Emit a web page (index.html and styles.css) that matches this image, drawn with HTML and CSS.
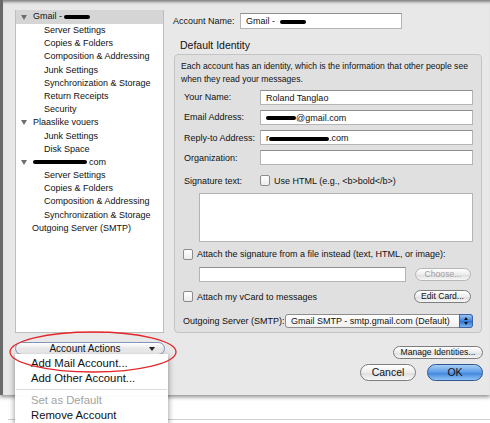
FILE: index.html
```html
<!DOCTYPE html>
<html lang="en">
<head>
    <meta charset="UTF-8">
    <title>Account Settings</title>
    <link rel="stylesheet" href="styles.css">
</head>
<body>
    <div class="window">
        <div class="sidebar">
            <ul class="tree">
                <li class="row parent selected"><span class="twisty"></span>Gmail - <span class="redact r-gmail"></span></li>
                <li class="row child">Server Settings</li>
                <li class="row child">Copies &amp; Folders</li>
                <li class="row child">Composition &amp; Addressing</li>
                <li class="row child">Junk Settings</li>
                <li class="row child">Synchronization &amp; Storage</li>
                <li class="row child">Return Receipts</li>
                <li class="row child">Security</li>
                <li class="row parent"><span class="twisty"></span>Plaaslike vouers</li>
                <li class="row child">Junk Settings</li>
                <li class="row child">Disk Space</li>
                <li class="row parent"><span class="twisty"></span><span class="redact r-other"></span>com</li>
                <li class="row child">Server Settings</li>
                <li class="row child">Copies &amp; Folders</li>
                <li class="row child">Composition &amp; Addressing</li>
                <li class="row child">Synchronization &amp; Storage</li>
                <li class="row top">Outgoing Server (SMTP)</li>
            </ul>
            <button class="actions-btn">Account Actions<span class="arrow"></span></button>
        </div>

        <div class="main">
            <div class="account-row">
                <label>Account Name:</label>
                <div class="field name-field">Gmail - <span class="redact r-gmail"></span></div>
            </div>

            <h2>Default Identity</h2>
            <div class="group">
                <p class="desc">Each account has an identity, which is the information that other people see when they read your messages.</p>

                <div class="form-row first">
                    <label>Your Name:</label>
                    <div class="field">Roland Tanglao</div>
                </div>
                <div class="form-row">
                    <label>Email Address:</label>
                    <div class="field"><span class="redact r-mail"></span>@gmail.com</div>
                </div>
                <div class="form-row">
                    <label>Reply-to Address:</label>
                    <div class="field">r<span class="redact r-reply"></span>.com</div>
                </div>
                <div class="form-row">
                    <label>Organization:</label>
                    <div class="field"></div>
                </div>
                <div class="form-row sig-row">
                    <label>Signature text:</label>
                    <span class="check"></span>
                    <span>Use HTML (e.g., &lt;b&gt;bold&lt;/b&gt;)</span>
                </div>
                <div class="sig-box"></div>

                <div class="check-row">
                    <span class="check"></span>
                    <span>Attach the signature from a file instead (text, HTML, or image):</span>
                </div>
                <div class="file-row">
                    <div class="field file-field"></div>
                    <button class="aqua disabled">Choose...</button>
                </div>
                <div class="check-row vcard-row">
                    <span class="check"></span>
                    <span>Attach my vCard to messages</span>
                    <button class="aqua edit-btn">Edit Card...</button>
                </div>
                <div class="smtp-row">
                    <label>Outgoing Server (SMTP):</label>
                    <div class="select">Gmail SMTP - smtp.gmail.com (Default)<span class="stepper"></span></div>
                </div>
            </div>

            <div class="manage-row">
                <button class="aqua">Manage Identities...</button>
            </div>
            <div class="dialog-buttons">
                <button class="aqua big">Cancel</button>
                <button class="aqua big primary">OK</button>
            </div>
        </div>
    </div>
    <div class="below"></div>

    <ul class="menu">
        <li>Add Mail Account...</li>
        <li>Add Other Account...</li>
        <li class="sep"></li>
        <li class="off">Set as Default</li>
        <li>Remove Account</li>
    </ul>

    <svg class="circle" width="490" height="423" viewBox="0 0 490 423">
        <ellipse cx="93" cy="352" rx="83" ry="20" fill="none" stroke="#e3262b" stroke-width="1.3"/>
    </svg>
</body>
</html>
```

FILE: styles.css
```css
* {
    margin: 0;
    padding: 0;
    box-sizing: border-box;
}

body {
    width: 490px;
    height: 423px;
    overflow: hidden;
    background: #ffffff;
    font-family: 'Liberation Sans', Arial, sans-serif;
    font-size: 9px;
    color: #111;
    position: relative;
}

.window {
    height: 395px;
    display: flex;
    background: #e8e8e8;
    border-left: 3px solid #6a6a6a;
    box-shadow: inset 0 4px 3px -2px rgba(0, 0, 0, 0.45), 0 2px 4px rgba(0, 0, 0, 0.45);
    padding-top: 10px;
}

.below {
    margin: 24px 0 0 8px;
    border-top: 1px solid #cfcfcf;
}

/* left account tree */
.sidebar {
    width: 161px;
    padding-left: 12px;
    display: flex;
    flex-direction: column;
}

.tree {
    list-style: none;
    width: 149px;
    height: 323px;
    background: #fff;
    border: 1px solid #bdbdbd;
    border-top: none;
}

.row {
    height: 13.2px;
    line-height: 13.2px;
    white-space: nowrap;
    display: flex;
    align-items: center;
}

.row.parent {
    padding-left: 4px;
}

.row.selected {
    background: #d5d5d5;
    height: 14px;
}

.row.child {
    padding-left: 28px;
}

.row.top {
    padding-left: 16px;
}

.twisty {
    width: 0;
    height: 0;
    border-left: 3px solid transparent;
    border-right: 3px solid transparent;
    border-top: 5px solid #6e6e6e;
    margin-right: 6px;
    margin-left: 1px;
}

.redact {
    display: inline-block;
    height: 4px;
    background: #000;
    border-radius: 3px;
    vertical-align: middle;
}

.r-gmail { width: 26px; margin-left: 2px; }
.r-other { width: 54px; margin-right: 2px; }
.r-mail { width: 30px; }
.r-reply { width: 60px; }

.actions-btn {
    margin-top: 9px;
    width: 150px;
    height: 13px;
    border: 1px solid #7f94b8;
    border-radius: 7px;
    background: linear-gradient(#ffffff, #e6e6e6 55%, #f6f6f6);
    font: inherit;
    font-size: 10px;
    line-height: 11px;
    position: relative;
    color: #111;
    padding-right: 10px;
}

.actions-btn .arrow {
    position: absolute;
    right: 9px;
    top: 4px;
    border-left: 3px solid transparent;
    border-right: 3px solid transparent;
    border-top: 4px solid #222;
}

/* right panel */
.main {
    flex: 1;
    padding-left: 9px;
    padding-right: 7px;
    display: flex;
    flex-direction: column;
}

label {
    white-space: nowrap;
}

.account-row {
    display: flex;
    align-items: center;
    height: 16px;
    margin-top: 3px;
}

.account-row label {
    width: 67px;
}

.field {
    height: 16px;
    background: #fff;
    border: 1px solid #b4b4b4;
    border-top-color: #8f8f8f;
    padding-left: 5px;
    line-height: 14px;
    white-space: nowrap;
}

.name-field {
    width: 162px;
}

h2 {
    font-size: 10.5px;
    font-weight: normal;
    margin: 10px 0 3px 7px;
    height: 12px;
    line-height: 12px;
}

.group {
    width: 308px;
    height: 279px;
    margin-left: 1px;
    background: #e0e0e0;
    border: 1px solid #c4c4c4;
    border-radius: 4px;
    padding: 5px 8px 0 6px;
}

.desc {
    line-height: 13px;
    height: 26px;
    font-size: 8.6px;
}

.form-row {
    display: flex;
    align-items: center;
    margin-top: 5.3px;
    height: 15px;
}

.form-row.first {
    margin-top: 3.5px;
}

.form-row label {
    width: 79px;
    padding-left: 3px;
}

.form-row .field {
    width: 213px;
    height: 15px;
}

.sig-row {
    margin-top: 8px;
}

.check {
    display: inline-block;
    width: 10px;
    height: 11px;
    background: linear-gradient(#fff, #ececec);
    border: 1px solid #8c8c8c;
    border-radius: 2px;
    margin-right: 4px;
    flex: none;
}

.sig-box {
    width: 274px;
    height: 49px;
    margin: 5px 0 0 18px;
    background: #fff;
    border: 1px solid #b4b4b4;
}

.check-row {
    display: flex;
    align-items: center;
    margin-top: 6px;
    padding-left: 2px;
    height: 12px;
}

.file-row {
    display: flex;
    align-items: center;
    height: 15px;
    margin: 7px 0 0 18px;
}

.file-field {
    width: 207px;
    height: 15px;
}

.aqua {
    font: inherit;
    font-size: 8.6px;
    height: 13px;
    line-height: 11px;
    padding: 0 6px;
    border: 1px solid #7d7d7d;
    border-radius: 7px;
    background: linear-gradient(#ffffff, #ececec 50%, #dcdcdc 51%, #f7f7f7);
    color: #111;
    white-space: nowrap;
}

.file-row .aqua {
    margin-left: 9px;
    width: 56px;
}

.aqua.disabled {
    color: #a0a0a0;
    border-color: #b5b5b5;
}

.vcard-row {
    margin-top: 8px;
    height: 13px;
}

.edit-btn {
    margin-left: auto;
    margin-right: 2px;
    width: 57px;
}

.smtp-row {
    display: flex;
    align-items: center;
    margin-top: 11px;
    padding-left: 2px;
    height: 13px;
}

.smtp-row label {
    width: 102px;
}

.select {
    width: 188px;
    height: 14px;
    border: 1px solid #8d8d8d;
    border-radius: 3px;
    background: linear-gradient(#fff, #f0f0f0);
    line-height: 12px;
    padding-left: 5px;
    position: relative;
}

.stepper {
    position: absolute;
    right: -1px;
    top: -1px;
    width: 14px;
    height: 14px;
    border-radius: 0 3px 3px 0;
    background: linear-gradient(#9cc4f2, #3c83de 50%, #2a6fd0 51%, #7fb6f0);
    border: 1px solid #3a63a8;
}

.stepper::before,
.stepper::after {
    content: "";
    position: absolute;
    left: 4px;
    border-left: 2px solid transparent;
    border-right: 2px solid transparent;
}

.stepper::before {
    top: 2px;
    border-bottom: 3px solid #111;
}

.stepper::after {
    bottom: 2px;
    border-top: 3px solid #111;
}

.manage-row {
    display: flex;
    justify-content: flex-end;
    margin-top: 13px;
}

.manage-row .aqua {
    width: 90px;
    padding: 0;
}

.dialog-buttons {
    display: flex;
    justify-content: flex-end;
    gap: 11px;
    margin-top: 5px;
}

.aqua.big {
    width: 56px;
    height: 17px;
    border-radius: 9px;
    font-size: 10.5px;
    line-height: 15px;
}

.aqua.primary {
    border-color: #2c5592;
    background: linear-gradient(#a8cff6, #5a9ae6 50%, #3b80dc 51%, #8fc3f6);
}

/* pop-up menu */
.menu {
    position: absolute;
    left: 15px;
    top: 354px;
    width: 153px;
    height: 80px;
    list-style: none;
    background: rgba(255, 255, 255, 0.97);
    box-shadow: 0 2px 6px rgba(0, 0, 0, 0.45);
    font-size: 11.3px;
    padding-top: 2px;
}

.menu li {
    height: 15px;
    line-height: 15px;
    padding-left: 16px;
    white-space: nowrap;
}

.menu li.sep {
    height: 7px;
    position: relative;
}

.menu li.sep::after {
    content: "";
    position: absolute;
    left: 1px;
    right: 1px;
    top: 3px;
    border-top: 1px solid #dcdcdc;
}

.menu li.off {
    color: #a3a3a3;
}

.circle {
    position: absolute;
    left: 0;
    top: 0;
    pointer-events: none;
}
```
